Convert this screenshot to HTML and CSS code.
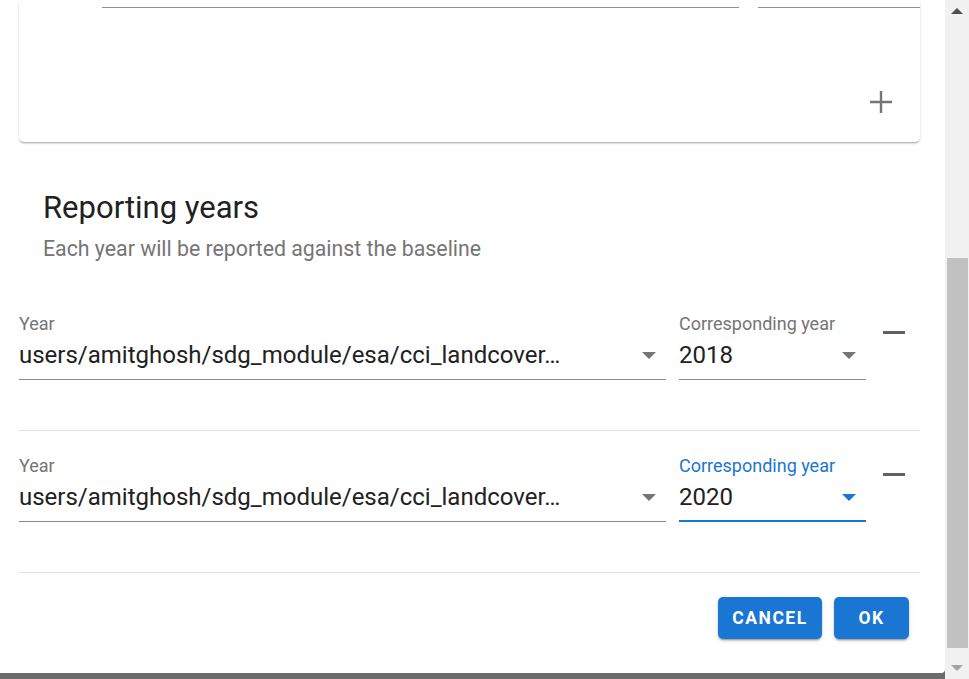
FILE: index.html
```html
<!DOCTYPE html>
<html lang="en">
<head>
<meta charset="utf-8">
<title>Reporting years</title>
<link rel="stylesheet" href="styles.css">
</head>
<body>
<div class="screen">
  <div class="main">
    <div class="panel">
      <div class="card">
        <div class="card-fields">
          <div class="card-line card-line-a"></div>
          <div class="card-line card-line-b"></div>
        </div>
        <div class="card-actions">
          <svg class="icon-add" width="24" height="24" viewBox="0 0 24 24"><path d="M12 1v22M1 12h22" stroke="#757575" stroke-width="2.4" fill="none"/></svg>
        </div>
      </div>

      <div class="section-head">
        <h2 class="title">Reporting years</h2>
        <p class="subtitle">Each year will be reported against the baseline</p>
      </div>

      <div class="rows">
        <div class="row">
          <div class="field field-image">
            <div class="label">Year</div>
            <div class="select">
              <span class="value">users/amitghosh/sdg_module/esa/cci_landcover…</span>
              <span class="arrow"></span>
            </div>
          </div>
          <div class="field field-year">
            <div class="label">Corresponding year</div>
            <div class="select">
              <span class="value">2018</span>
              <span class="arrow"></span>
            </div>
          </div>
          <div class="remove"><span class="minus"></span></div>
        </div>

        <div class="row">
          <div class="field field-image">
            <div class="label">Year</div>
            <div class="select">
              <span class="value">users/amitghosh/sdg_module/esa/cci_landcover…</span>
              <span class="arrow"></span>
            </div>
          </div>
          <div class="field field-year focused">
            <div class="label">Corresponding year</div>
            <div class="select">
              <span class="value">2020</span>
              <span class="arrow"></span>
            </div>
          </div>
          <div class="remove"><span class="minus"></span></div>
        </div>
      </div>

      <div class="footer">
        <button class="btn btn-cancel">CANCEL</button>
        <button class="btn btn-ok">OK</button>
      </div>
    </div>
  </div>
  <div class="scrollbar">
    <div class="sb-btn"><span class="sb-up"></span></div>
    <div class="sb-track"><div class="sb-thumb"></div></div>
    <div class="sb-btn"><span class="sb-down"></span></div>
  </div>
</div>
</body>
</html>
```
FILE: styles.css
```css
* { box-sizing: border-box; }
html, body { margin: 0; padding: 0; }
body {
  width: 969px;
  height: 679px;
  overflow: hidden;
  background: #ffffff;
  font-family: Roboto, "Noto Sans", "Liberation Sans", sans-serif;
  color: rgba(0,0,0,0.87);
}
.screen {
  display: flex;
  width: 969px;
  height: 679px;
}
.main {
  width: 945px;
  height: 679px;
  background: #6b6b6b;
}
.panel {
  height: 673px;
  background: #ffffff;
  border-bottom-right-radius: 4px;
  padding: 0 25px 0 19px;
  display: flex;
  flex-direction: column;
}

/* top card */
.card {
  height: 142px;
  flex: none;
  background: #fff;
  border-radius: 0 0 5px 5px;
  box-shadow: 0 2px 2px -1px rgba(0,0,0,0.28), 0 1px 3px 0 rgba(0,0,0,0.12);
  display: flex;
  flex-direction: column;
}
.card-fields {
  display: flex;
  gap: 19px;
  padding: 7px 0 0 83px;
}
.card-line { height: 1px; background: #8f8f8f; }
.card-line-a { width: 637px; }
.card-line-b { flex: 1; }
.card-actions {
  display: flex;
  justify-content: flex-end;
  padding: 82px 27px 0 0;
}
.icon-add { display: block; }

/* section head */
.section-head { padding: 48px 0 0 24px; flex: none; }
.title {
  margin: 0;
  font-size: 31px;
  line-height: 36px;
  font-weight: 400;
  color: #212121;
}
.subtitle {
  margin: 10px 0 0;
  font-size: 21.3px;
  line-height: 26px;
  color: #757575;
}

/* rows */
.rows {
  margin-top: 27px;
  display: flex;
  flex-direction: column;
  flex: none;
}
.row {
  display: flex;
  align-items: flex-start;
  height: 142px;
  border-bottom: 1px solid #e0e0e0;
  padding-top: 25px;
}
.field { display: flex; flex-direction: column; flex: none; }
.field-image { width: 647px; }
.field-year { width: 187px; margin-left: 13px; }
.label {
  font-size: 18px;
  line-height: 20px;
  color: #757575;
}
.select {
  display: flex;
  align-items: center;
  border-bottom: 1px solid #8a8a8a;
  margin-top: 6px;
  padding-bottom: 9px;
}
.value {
  flex: 1;
  font-size: 24px;
  line-height: 30px;
  white-space: nowrap;
  overflow: hidden;
  color: #212121;
}
.arrow {
  width: 0; height: 0;
  border-left: 7px solid transparent;
  border-right: 7px solid transparent;
  border-top: 7px solid #757575;
  margin-right: 10px;
}
.focused .label { color: #1976d2; }
.focused .select { border-bottom: 2px solid #1976d2; padding-bottom: 8px; }
.focused .arrow { border-top-color: #1976d2; }
.remove {
  width: 54px;
  flex: none;
  padding: 17px 0 0 17px;
}
.minus {
  display: block;
  width: 22px;
  height: 3px;
  background: #616161;
}

/* footer */
.footer {
  display: flex;
  justify-content: flex-end;
  gap: 12px;
  padding: 24px 11px 0 0;
}
.btn {
  height: 42px;
  padding: 0;
  border: none;
  border-radius: 5px;
  background: #1976d2;
  color: #fff;
  font-family: Roboto, "Noto Sans", sans-serif;
  font-size: 17.5px;
  font-weight: 700;
  letter-spacing: 1.5px;
  box-shadow: 0 3px 1px -2px rgba(0,0,0,0.2), 0 2px 2px 0 rgba(0,0,0,0.14), 0 1px 5px 0 rgba(0,0,0,0.12);
}
.btn-cancel { width: 104px; }
.btn-ok { width: 75px; }

/* scrollbar */
.scrollbar {
  width: 24px;
  height: 679px;
  background: #f1f1f1;
  display: flex;
  flex-direction: column;
}
.sb-btn {
  height: 22px;
  display: flex;
  align-items: center;
  justify-content: center;
}
.sb-up {
  width: 0; height: 0;
  border-left: 6px solid transparent;
  border-right: 6px solid transparent;
  border-bottom: 6px solid #505050;
}
.sb-down {
  width: 0; height: 0;
  border-left: 6px solid transparent;
  border-right: 6px solid transparent;
  border-top: 6px solid #a3a3a3;
}
.sb-track {
  flex: 1;
  padding: 236px 1px 0 2px;
}
.sb-thumb {
  height: 390px;
  background: #c1c1c1;
}
```
